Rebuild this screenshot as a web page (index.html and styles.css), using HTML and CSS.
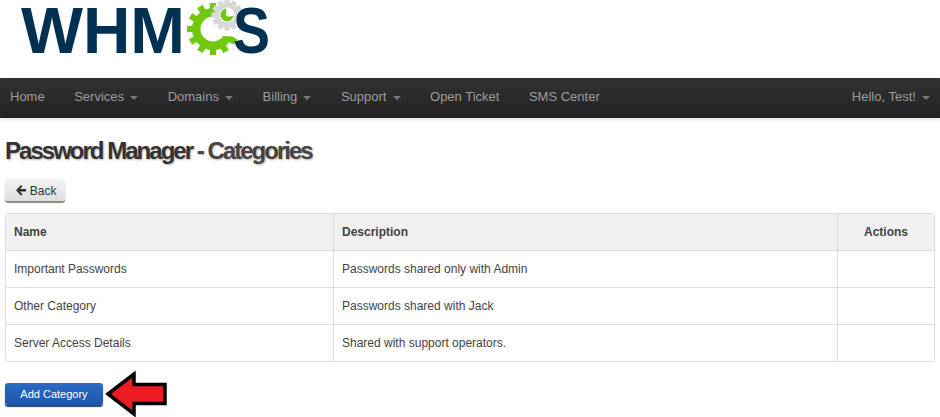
FILE: index.html
```html
<!DOCTYPE html>
<html lang="en">
<head>
<meta charset="utf-8">
<title>Password Manager - Categories</title>
<link rel="stylesheet" href="styles.css">
</head>
<body>
<header class="brand">
  <svg class="logo" width="300" height="78" viewBox="0 0 300 78" role="img" aria-label="WHMCS">
    <text class="logo-text" x="21" y="53" textLength="164" lengthAdjust="spacingAndGlyphs">WHM</text>
    <g transform="translate(213 29)">
      <g class="gear-green">
        <circle r="21"/>
        <g id="gb"><rect x="-3.2" y="-26" width="6.4" height="52"/><rect x="-26" y="-3.2" width="52" height="6.4"/></g>
        <use href="#gb" transform="rotate(30)"/>
        <use href="#gb" transform="rotate(60)"/>
      </g>
      <circle class="hole-white" r="12.5"/>
      <path class="hole-white" d="M3-13 L20-30 L32-8 L28 8 L11 7 Z"/>
    </g>
    <g transform="translate(227 15)">
      <g class="gear-grey">
        <circle r="12.5"/>
        <g id="gt"><rect x="-2.6" y="-15.5" width="5.2" height="31"/><rect x="-15.5" y="-2.6" width="31" height="5.2"/></g>
        <use href="#gt" transform="rotate(30)"/>
        <use href="#gt" transform="rotate(60)"/>
      </g>
      <circle class="hole-white" r="7.5"/>
      <path class="wrench" d="M-1-6.5A6.5 6.5 0 1 0 6.5 1L2.5 1.5A2.6 2.6 0 0 1-.5-2.5Z"/>
    </g>
    <text class="logo-text" x="233" y="53" textLength="37" lengthAdjust="spacingAndGlyphs">S</text>
  </svg>
</header>

<nav class="navbar">
  <ul class="nav-list">
    <li class="nav-item">Home</li>
    <li class="nav-item">Services <span class="caret"></span></li>
    <li class="nav-item">Domains <span class="caret"></span></li>
    <li class="nav-item">Billing <span class="caret"></span></li>
    <li class="nav-item">Support <span class="caret"></span></li>
    <li class="nav-item">Open Ticket</li>
    <li class="nav-item">SMS Center</li>
  </ul>
  <div class="nav-item">Hello, Test! <span class="caret"></span></div>
</nav>

<main class="content">
  <h1 class="title">Password Manager <span class="title-sub">- Categories</span></h1>
  <button class="btn btn-back" type="button"><svg class="arrow-left" width="10" height="11" viewBox="0 0 10 11"><path d="M5 0 6.5 1.5 4 4.1H10V6.6H4L6.5 9.2 5 10.7 0 5.35Z"/></svg> Back</button>
  <table class="grid">
    <thead>
      <tr><th class="col-name">Name</th><th class="col-desc">Description</th><th class="col-actions">Actions</th></tr>
    </thead>
    <tbody>
      <tr><td>Important Passwords</td><td>Passwords shared only with Admin</td><td></td></tr>
      <tr><td>Other Category</td><td>Passwords shared with Jack</td><td></td></tr>
      <tr><td>Server Access Details</td><td>Shared with support operators.</td><td></td></tr>
    </tbody>
  </table>
  <div class="actions">
    <button class="btn btn-primary" type="button">Add Category</button>
    <svg class="callout" width="62" height="46" viewBox="0 0 62 46"><path d="M3 23 29 3V13.5H60V32.5H29V43Z"/></svg>
  </div>
</main>
</body>
</html>
```
FILE: styles.css
```css
* { box-sizing: border-box; }
html, body { margin: 0; padding: 0; }
body {
  width: 940px;
  height: 417px;
  overflow: hidden;
  background: #fff;
  color: #333;
  font-family: "Liberation Sans", Arial, sans-serif;
  font-size: 12px;
}
.brand { height: 78px; }
.logo { display: block; }
.logo-text {
  font-family: "Liberation Sans", Arial, sans-serif;
  font-weight: 700;
  font-size: 65px;
  fill: #003153;
}
.gear-grey { fill: #d8d8d8; }
.gear-green { fill: #72c70f; }
.hole-white { fill: #fff; }
.wrench { fill: #72c70f; }

.navbar {
  height: 40px;
  display: flex;
  justify-content: space-between;
  align-items: center;
  padding: 0 10px 2px;
  background: linear-gradient(#333333, #222222);
  box-shadow: 0 1px 4px rgba(0, 0, 0, 0.15);
  color: #9d9d9d;
}
.nav-list {
  display: flex;
  gap: 29.5px;
  margin: 0;
  padding: 0;
  list-style: none;
}
.nav-item { font-size: 13px; line-height: 18px; }
.caret {
  display: inline-block;
  margin-left: 2.5px;
  vertical-align: middle;
  border-top: 4px solid #777;
  border-left: 4px solid transparent;
  border-right: 4px solid transparent;
}

.content { padding: 0 5px; }
.title {
  margin: 20px 0 15px;
  font-size: 24px;
  line-height: 26px;
  font-weight: 700;
  letter-spacing: -1.98px;
  color: #333;
  text-shadow: 1px 1px 2px rgba(0, 0, 0, 0.3);
}
.title-sub { color: #444; }
.btn {
  display: block;
  height: 22px;
  padding: 0;
  border: 0;
  border-radius: 3px;
  font-family: inherit;
  font-size: 12px;
}
.btn-back {
  width: 60px;
  padding: 1px 0 0 3px;
  color: #333;
  background: linear-gradient(#f3f3f3, #dedee2);
  box-shadow: 0 2px 1px #888;
}
.arrow-left { fill: #333; vertical-align: -1px; }
.grid {
  width: 930px;
  margin-top: 12px;
  border-collapse: separate;
  border-spacing: 0;
  table-layout: fixed;
  border: 1px solid #ddd;
  border-radius: 3px;
}
.grid th, .grid td {
  padding: 0 8px;
  text-align: left;
  border-left: 1px solid #ddd;
  border-top: 1px solid #ddd;
}
.grid th:first-child, .grid td:first-child { border-left: 0; }
.grid thead th {
  height: 36px;
  border-top: 0;
  background: #f1f1f1;
  color: #444;
  font-size: 12px;
}
.grid td { height: 37px; color: #444; }
.grid .col-name { width: 327px; }
.grid .col-actions { width: 97px; text-align: center; }
.actions {
  display: flex;
  align-items: center;
  gap: 2px;
  margin-top: 9px;
}
.btn-primary {
  width: 98px;
  font-size: 11px;
  color: #fff;
  background: linear-gradient(#2a6bc5, #1f56a8);
  box-shadow: 0 2px 1px #174a8c;
}
.callout { fill: #ed1c24; stroke: #000; stroke-width: 3.5; }
```
